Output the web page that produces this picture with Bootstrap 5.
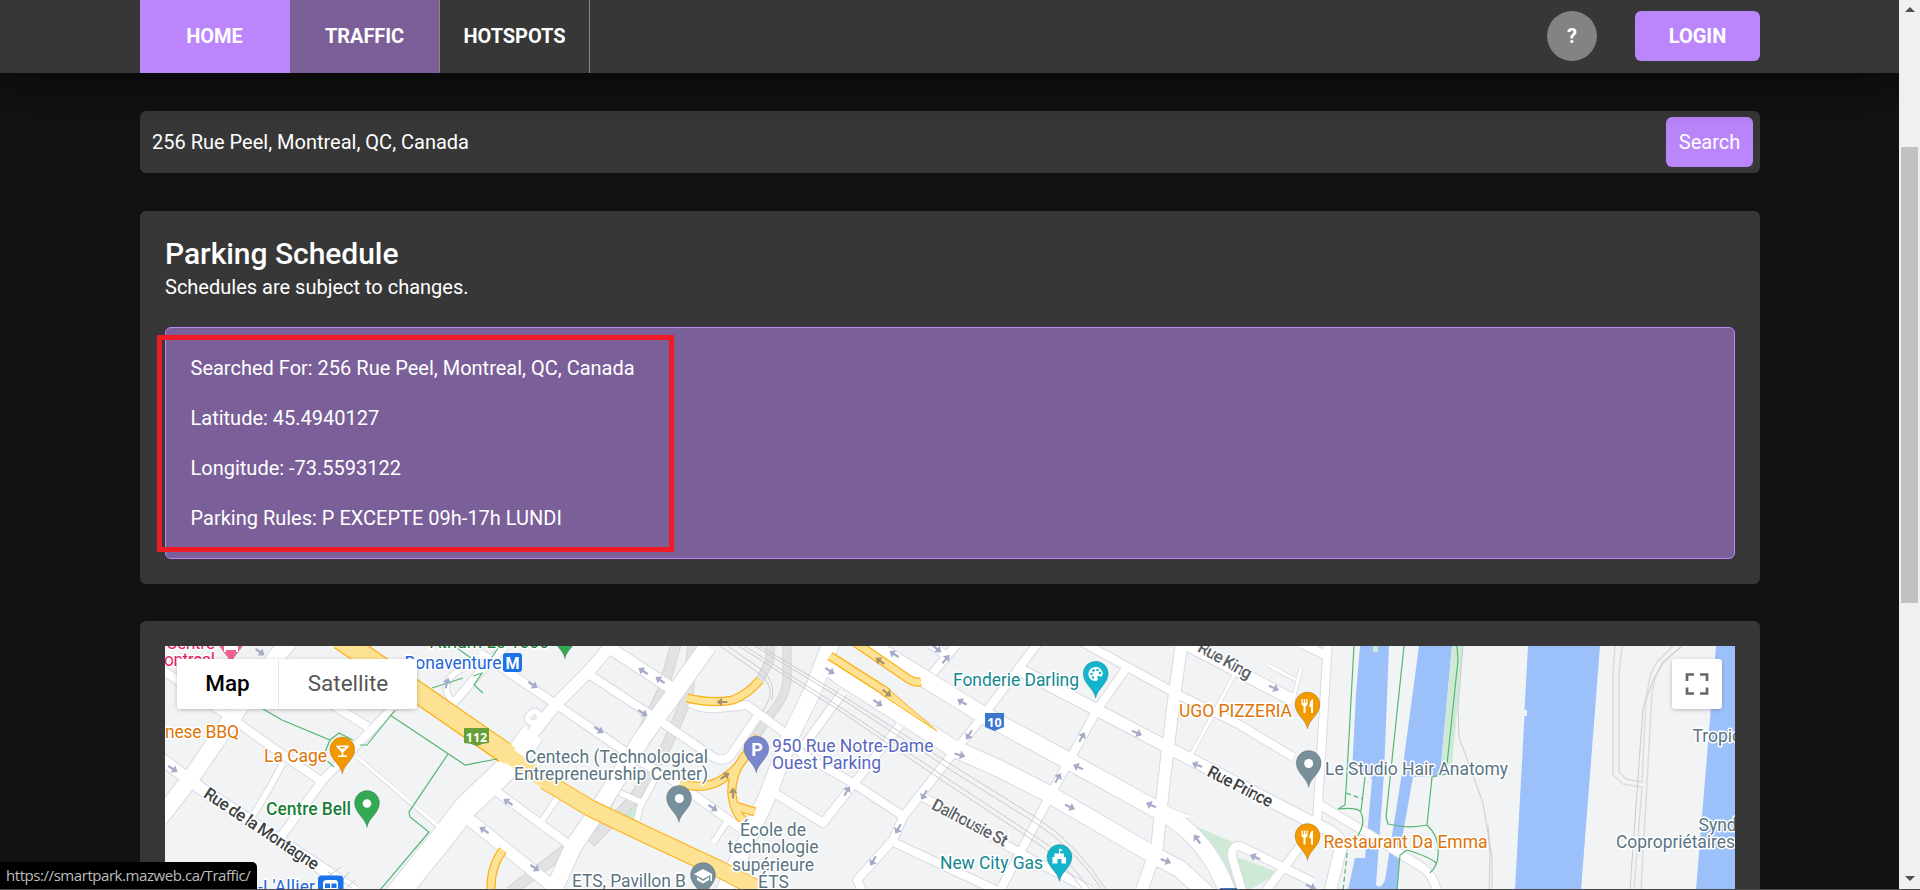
<!DOCTYPE html>
<html lang="en">
<head>
<meta charset="utf-8">
<meta name="viewport" content="width=device-width, initial-scale=1">
<title>SmartPark - Traffic</title>
<link href="https://cdn.jsdelivr.net/npm/bootstrap@5.3.0/dist/css/bootstrap.min.css" rel="stylesheet">
<style>
html{font-size:20px}
body{font-family:Roboto,"Liberation Sans",sans-serif;font-size:20px;line-height:30px;background:#121212;color:#fff;height:890px;overflow:hidden}
.viewport{height:889px;overflow:hidden}
.frame-edge{height:1px;background:#4b494c}
.wrap{width:1620px;margin-left:140px}
.topbar{height:73px;background:#373737;box-shadow:0 10px 50px rgba(0,0,0,.6);z-index:2;padding:0}
.tab{width:150px;height:73px;color:#fff;font-weight:700;border-right:1px solid #878787;text-decoration:none;padding-bottom:2px;letter-spacing:-.05px}
.tab.home{background:#bb86fc;border-color:#bb86fc}
.tab.current{background:#7b5f99}
.actions{padding-bottom:1px}
.help{width:50px;height:50px;background:#838383;font-weight:700}
.btn-violet,.btn-violet:hover{background:#bb86fc;color:#fff;border:0;border-radius:6px;height:50px;padding:0;font-size:20px}
.login{width:125px;margin-left:38px;font-weight:700}
.find{width:87px}
.panel{background:#373737;border-radius:6px}
.searchbar{height:62px;margin-top:38px;padding:0 7px 0 12px}
.schedule{height:373px;margin-top:38px;padding:25px}
.schedule h1{font-size:30px;line-height:36px;font-weight:500;margin:0;letter-spacing:-.04px}
.result{height:232px;background:#7b5f99;border:1px solid #bb86fc;border-radius:6px;margin-top:25px;padding:25px 24.500px}
.result p{margin:0 0 20px}
.marker{left:-9px;top:7px;width:517px;height:217px;border:5px solid #ed1c24}
.mappanel{margin-top:37px;padding:25px 25px 0;height:268px;border-radius:6px 6px 0 0}
.mapbox{height:243px;background:#f1f3f4;overflow:hidden}
.mapbox svg.chart{display:block}
.maptype{left:12px;top:13px;width:240px;height:50px;color:#565656;font-size:22.5px;background:#fff}
.maptype>div{padding-bottom:2px}
.maptype,.fullscreen{background:#fff;border-radius:3px;box-shadow:0 1px 5px -1px rgba(0,0,0,.35)}
.maptype .on{width:102px;color:#000;font-weight:500;border-right:1px solid #e9e9e9}
.fullscreen{right:13px;top:13px;width:50px;height:50px}
.status{left:0;bottom:1px;width:257px;height:27px;background:#000;color:#bdbdbd;border-top-right-radius:5px;font:15px/26px "Open Sans","Noto Sans",sans-serif;letter-spacing:-.44px;padding-left:6px;z-index:5;white-space:nowrap}
.scroller{width:21px;background:#f0f0f0;z-index:3}
.thumb{width:17px;height:456px;background:#c1c1c1;margin-top:129px}
.chart text{font:17.5px Roboto,sans-serif;paint-order:stroke;stroke:#fff;stroke-width:3px;stroke-linejoin:round}
.chart .st{font-weight:500;font-size:17px;fill:#3c4043}
.chart .sh{font:bold 12.5px "Open Sans",sans-serif;fill:#fff;stroke:none}
.slate{fill:#5a7482}.food{fill:#dc7507}.teal{fill:#128891}.indigo{fill:#5866c0}.transit{fill:#2567d8}
.trail{fill:none;stroke:#54b772;stroke-width:1.2}
.rail{fill:none;stroke:#c9cbce;stroke-width:1}
</style>
</head>
<body>
<div class="viewport d-flex">
<div class="flex-grow-1">
<nav class="topbar navbar position-relative">
 <div class="wrap d-flex justify-content-between align-items-center">
  <div class="d-flex">
   <a class="tab home d-flex align-items-center justify-content-center" href="#">HOME</a>
   <a class="tab current d-flex align-items-center justify-content-center" href="#">TRAFFIC</a>
   <a class="tab d-flex align-items-center justify-content-center" href="#">HOTSPOTS</a>
  </div>
  <div class="actions d-flex align-items-center">
   <span class="help rounded-circle d-flex align-items-center justify-content-center">?</span>
   <button class="btn btn-violet login">LOGIN</button>
  </div>
 </div>
</nav>
<main class="wrap">
 <div class="panel searchbar d-flex align-items-center justify-content-between">
  <span>256 Rue Peel, Montreal, QC, Canada</span>
  <button class="btn btn-violet find">Search</button>
 </div>
 <section class="panel schedule">
  <h1>Parking Schedule</h1>
  <div>Schedules are subject to changes.</div>
  <div class="result position-relative">
   <p>Searched For: 256 Rue Peel, Montreal, QC, Canada</p>
   <p>Latitude: 45.4940127</p>
   <p>Longitude: -73.5593122</p>
   <p>Parking Rules: P EXCEPTE 09h-17h LUNDI</p>
   <div class="marker position-absolute"></div>
  </div>
 </section>
 <section class="panel mappanel">
 <div class="mapbox position-relative">
 <svg class="chart" width="1570" height="243" viewBox="165 646 1570 243">
 <defs>
  <g id="big">
   <path d="M160 818L193 775L236 712L262 675L290 640"/>
   <path d="M820 661L840 676L898 713L953 748L1000 769L1047 793L1157 857L1180 869L1207 894"/>
   <path d="M862 640L980 713L1067 760L1163 813Q1210 840 1228 894"/>
   <path d="M708 646L677 690L641 740L600 807L573 847L553 892"/>
   <path d="M832 640L813 690L790 737L767 797L747 840L724 892"/>
  </g>
  <g id="mid">
   <path d="M160 758L203 790L330 874L355 892"/>
   <path d="M610 648L677 692"/>
   <path d="M533 733L557 703L590 670L617 638"/>
   <path d="M470 820L557 890"/>
   <path d="M1020 670L1097 710L1167 747L1240 785L1313 823Q1343 835 1341 847L1330 892"/>
   <path d="M1180 641L1293 700"/>
   <path d="M1182 640L1173 707L1163 790L1157 847L1141 892"/>
  </g>
  <g id="minor">
   <path d="M160 668L245 728L322 782"/><path d="M410 690L323 780L280 838"/>
   <path d="M325 700L368 727"/><path d="M505 646L480 672L452 705"/>
   <path d="M480 653L557 705L633 757L677 783L740 828"/>
   <path d="M690 703Q700 709 718 708L747 705L785 733L803 755L853 783L903 816"/>
   <path d="M590 675L663 723L713 757Q724 763 731 755L757 717"/>
   <path d="M497 792L567 843"/>
   <path d="M843 692L803 747"/><path d="M773 792L823 823L853 785L900 725"/>
   <path d="M1040 640L980 720L953 753L903 817L893 840L857 880L864 894"/>
   <path d="M893 842L1000 892"/>
   <path d="M1075 638L1173 692L1240 725L1293 757"/>
   <path d="M1127 667L1097 710L1053 790L1020 853L998 894"/>
   <path d="M923 797L1020 853L1090 890"/>
   <path d="M1328 640L1320 773L1317 820M1300 643L1328 656"/>
   <path d="M1317 803L1367 833L1423 868Q1434 876 1437 892"/>
   <path d="M1243 894L1232 857Q1231 845 1240 846L1313 882M1305 840L1265 892"/>
   <path d="M957 644L933 673M930 644L947 656"/>
  </g>
  <g id="lane">
   <path d="M283 763L270 787L252 817"/><path d="M558 797L541 822"/><path d="M727 822L713 843"/>
   <path d="M637 820L640 807L660 770M620 793L643 803"/>
   <path d="M541 720C530 726 524 720 530 714S541 714 539 722"/>
   <path d="M453 702C441 690 446 676 462 669"/>
  </g>
  <g id="ramps">
   <path d="M687 698Q712 704 733 700Q748 694 760 680"/>
   <path d="M680 783Q703 791 721 780T747 753L759 737"/>
   <path d="M745 755Q730 777 732 795T745 822M735 806L755 812"/>
   <path d="M830 656L888 693"/><path d="M853 641L907 678Q914 683 921 682"/>
   <path d="M503 850Q490 867 491 892"/>
  </g>
  <path id="arr" d="M-5.500-1.100H0V-4.300L5.500 0L0 4.300V1.100H-5.500Z"/>
  <g id="pin"><path d="M0 24.5C-1.500 15 -12.500 10 -12.500 0A12.500 12.500 0 0 1 12.500 0C12.500 10 1.500 15 0 24.500Z" stroke="#000" stroke-opacity=".15"/></g>
  <path id="fork" fill="#fff" d="M-6-7V-2Q-6 0-4 0V7H-2V0Q0 0 0-2V-7H-1.300V-3H-2.300V-7H-3.700V-3H-4.700V-7ZM5.500-7Q2-6 2 0V1H3.500V7H5.500Z"/>
 </defs>
 <rect x="165" y="646" width="1570" height="243" fill="#f1f3f4"/>
 <!-- water and green space -->
 <g fill="#9cc0f9">
  <path d="M1360 646H1452L1440 776L1413 777L1400 850L1397 890H1348L1355 858H1365L1372 780L1370 773H1352L1356 694Z"/>
  <path d="M1528 646H1600L1581 890H1515L1524.500 716H1527V710H1524.500Z"/><path d="M1716 646H1735V890H1696Z"/>
 </g>
 <path fill="#f1f3f4" d="M1389 646H1419L1402 773L1385 880Q1381 890 1376 885L1384 773Z"/>
 <path fill="#ceead6" d="M1452 646H1463L1452 767L1440 775ZM1197 827L1235 843L1240 890H1228ZM1237 857L1280 873L1245 892ZM640 780H653L637 822H622ZM1373 646H1378V652H1373Z"/>
 <!-- tunnels -->
 <g fill="none" stroke="#d4d4d4" stroke-width="11"><path d="M677 640L663 690L640 737L615 788Q600 825 565 850L510 892M693 640L688 696L667 745L633 800L590 843"/><path stroke-width="9" d="M787 640V680Q786 697 770 715L750 745M770 640V660L760 680"/></g>
 <g fill="none" stroke="#e2e2e2" stroke-width="9"><path d="M677 640L663 690L640 737L615 788Q600 825 565 850L510 892M693 640L688 696L667 745L633 800L590 843"/><path stroke-width="7" d="M787 640V680Q786 697 770 715L750 745M770 640V660L760 680"/></g>
 <path class="rail" d="M720 646L757 672Q772 682 770 697L757 724M728 646L762 670Q776 682 772 700"/>
 <!-- street casings, then surfaces -->
 <g fill="none" stroke="#d9dbe2" stroke-linejoin="round">
  <use href="#big" stroke-width="18.500"/><use href="#mid" stroke-width="13.500"/><use href="#minor" stroke-width="10"/><use href="#lane" stroke-width="7.500"/>
  <path stroke-width="25" d="M395 897L450 828L465 808L510 765L533 733"/>
  <path stroke-width="4.500" d="M357 757L450 837M1237 670L1190 757M1268 665L1296 680M1301 668L1294 696M1163 807L1189 817"/>
 </g>
 <g fill="none" stroke="#fff" stroke-linejoin="round">
  <use href="#big" stroke-width="16.500"/><use href="#mid" stroke-width="11.500"/><use href="#minor" stroke-width="8"/><use href="#lane" stroke-width="5.500"/>
  <path stroke-width="23" d="M395 897L450 828L465 808L510 765L533 733"/>
  <path stroke-width="3" d="M357 757L452 838M1237 670L1190 757M1268 665L1296 680M1301 668L1294 696M1163 807L1189 817"/>
 </g>
 <!-- highways -->
 <g fill="none" stroke="#fbb117" stroke-linejoin="round"><use href="#ramps" stroke-width="9.200"/><path stroke-width="22" d="M340 639L433 703L505 753"/><path stroke-width="17.500" d="M545 781L590 808L640 832L717 868L760 890"/></g>
 <path d="M885 686L937 731L882 695Z" fill="#fde293" stroke="#fbb117"/>
 <g fill="none" stroke="#fde293" stroke-linejoin="round"><use href="#ramps" stroke-width="6.800"/><path stroke-width="19.500" d="M340 639L433 703L510 756"/><path stroke-width="15.500" d="M505 753L545 781L590 808L640 832L717 868L760 890"/></g>
 <!-- railways -->
 <g class="rail">
  <path d="M755 643L840 694L960 770L1037 818Q1075 842 1108 892"/><path d="M750 643L840 698L957 774L1034 822Q1072 845 1104 892"/>
  <path d="M740 643L840 707L945 777L1030 833Q1064 852 1092 892"/><path d="M734 643L840 711L940 779L1028 837Q1058 855 1085 892"/>
  <path d="M1463 646L1458 707L1459 737L1483 803L1492 857V890M1488 825L1490 857L1489 890"/>
  <path stroke="#dadcde" stroke-width="1.500" d="M1615 646L1613 673V775L1623 784L1642 787L1634 890M1622 646L1619 673V772L1626 779L1642 782L1646 697L1651 673L1657 662L1673 646M1682 646L1663 662L1655 677L1652 693L1641 890"/>
  <path d="M1682 646L1663 663L1652 683L1643 708L1630 890M326 878L341 867M335 889L349 872M345 889L355 880M328 872L352 888"/>
 </g>
 <!-- footpaths -->
 <g class="trail">
  <path d="M263 709L282 720L330 740L339 733L353 740M395 710L367 745H360M330 740L323 757L334 767M390 715L465 765L497 759M448 754L409 812L410 817L429 832L380 890M432 688L463 678M473 676L482 673L474 685L483 693M457 648L485 668L498 648"/>
  <path d="M1457 646L1458 660L1446 774L1432 777L1427 825Q1410 829 1388 824L1386 817L1404 646M1354 646L1347 773L1345 805L1338 809Q1355 807 1360 811Q1367 822 1357 837M1365 777L1361 811M1427 825Q1440 837 1438 855Q1438 865 1430 873M1436 863Q1430 857 1407 850L1400 855L1397 890"/>
  <path stroke-dasharray="5 3" d="M1346 793L1363 799M1357 837H1349L1343 890"/>
 </g>
 <g fill="#a6abc9" id="arrows"></g>
 <g fill="#a89468" id="rampArrows"></g>
 <!-- route shields -->
 <path d="M464 728H489V743Q483 743 477 746Q470 743 464 743Z" fill="#689f38"/><text class="sh" x="476.500" y="741.500" text-anchor="middle">112</text>
 <path d="M985 713H1004V727Q999 729 994.500 731Q990 729 985 727Z" fill="#3a77cf"/><text class="sh" x="994.500" y="726.500" text-anchor="middle">10</text>
 <rect x="1220" y="888" width="17" height="2" fill="#3a77cf"/>
 <!-- place labels -->
 <g fill="#e91e63"><text x="166" y="649" textLength="49">Centre</text><text x="164" y="665.500" textLength="51">ontreal</text></g>
 <g class="food"><text x="165" y="738" textLength="74">nese BBQ</text><text x="264" y="762" textLength="63">La Cage</text><text x="1179" y="716.700" textLength="113">UGO PIZZERIA</text><text x="1323.500" y="848.300" textLength="164">Restaurant Da Emma</text></g>
 <g fill="#188038"><text x="266" y="815" textLength="85" style="font-weight:500">Centre Bell</text><text x="430" y="648" textLength="119">Atrium Le 1000</text></g>
 <g class="transit"><text x="404.500" y="668.500" textLength="97">Bonaventure</text><text x="258" y="893" textLength="57">-L'Allier</text></g>
 <g class="slate"><text x="525" y="762.700" textLength="183">Centech (Technological</text><text x="514" y="780" textLength="194">Entrepreneurship Center)</text>
  <text x="740" y="835.500" textLength="66">École de</text><text x="727.500" y="853" textLength="91">technologie</text><text x="732" y="870.700" textLength="82">supérieure</text><text x="758" y="888" textLength="31">ÉTS</text><text x="572" y="886.700" textLength="114">ETS, Pavillon B</text>
  <text x="1325" y="775" textLength="183">Le Studio Hair Anatomy</text><text x="1692.500" y="742">Tropic</text><text x="1698.500" y="831">Synd</text><text x="1616" y="848.300" textLength="119">Copropriétaires</text></g>
 <g class="indigo"><text x="772" y="751.700" textLength="161.500">950 Rue Notre-Dame</text><text x="772" y="769.200" textLength="109">Ouest Parking</text></g>
 <g class="teal"><text x="953" y="685.700" textLength="126">Fonderie Darling</text><text x="940" y="868.700" textLength="103">New City Gas</text></g>
 <text class="st" transform="translate(202.500 796.500)rotate(33.500)" textLength="134">Rue de la Montagne</text>
 <text class="st" style="fill:#5f6368" transform="translate(930.500 808.500)rotate(27.500)" textLength="83">Dalhousie St</text>
 <text class="st" transform="translate(1206 775.500)rotate(27)" textLength="71">Rue Prince</text>
 <text class="st" style="fill:#5f6368" transform="translate(1196.500 651)rotate(29)" textLength="59">Rue King</text>
 <!-- pins -->
 <g fill="#f06292" transform="translate(231 640)"><use href="#pin"/><path fill="#fff" d="M-7 4H7V12H5V10H-5V12H-7Z"/></g>
 <g fill="#34a853"><use href="#pin" x="565" y="634.500"/><use href="#pin" x="367" y="803"/></g><circle cx="367" cy="803.500" r="4.300" fill="#fff"/>
 <g fill="#f29900"><use href="#pin" x="342.300" y="749.500"/><use href="#pin" x="1307.500" y="704.500"/><use href="#pin" x="1307.500" y="836"/></g>
 <path d="M336.500 745.500H348.500V747L343.300 752.500V755.500H347V757H338V755.500H341.700V752.500L336.500 747ZM339.500 747L341 748.600H344L345.500 747Z" fill="#fff" fill-rule="evenodd"/>
 <use href="#fork" x="1307.500" y="706"/><use href="#fork" x="1307.500" y="837.500"/>
 <g fill="#78909c"><use href="#pin" x="679" y="798"/><use href="#pin" x="1308.700" y="763"/><use href="#pin" x="703" y="875"/></g>
 <circle cx="679.300" cy="798.500" r="4.500" fill="#fff"/><circle cx="1308.700" cy="763.500" r="4.500" fill="#fff"/>
 <path fill="#fff" d="M694 874L703 869L712 874V881H710.500V875L703 879ZM697 877L703 881L709 877V880L703 883.500L697 880Z"/>
 <g fill="#7986cb"><use href="#pin" x="756.300" y="748.500"/></g><text x="757" y="755.500" text-anchor="middle" style="font-weight:700;font-size:18px;fill:#fff;stroke:none">P</text>
 <g fill="#12b5cb"><use href="#pin" x="1095.700" y="673.700"/><use href="#pin" x="1059.500" y="857"/></g>
 <path fill="#fff" d="M1096 667C1086 667 1086 681 1096 681Q1099 680 1097 677Q1098 675 1101 677Q1104 674 1102 671Q1100 667 1096 667Z"/>
 <g fill="#12b5cb"><circle cx="1091.500" cy="674" r="1.300"/><circle cx="1093.500" cy="670.500" r="1.300"/><circle cx="1097.500" cy="670" r="1.300"/><circle cx="1100" cy="673" r="1.300"/><circle cx="1093" cy="677.500" r="1.300"/></g>
 <path fill="#fff" d="M1059 848.500L1063 850L1060 851.500V853.500H1064V857H1066V863.500H1061.500V859H1057.500V863.500H1052.500V857H1054.500V853.500H1059Z"/>
 <rect x="503" y="653" width="19" height="19" rx="3" fill="#1a73e8"/><text x="512.500" y="668.500" text-anchor="middle" style="font-weight:700;font-size:16px;fill:#fff;stroke:none">M</text>
 <rect x="318" y="875.500" width="25.500" height="22" rx="4" fill="#1a73e8"/><path d="M323 889V883Q323 880 327 880H335Q338 880 338 883V889Z" fill="#fff"/><path fill="#1a73e8" d="M325 883.500H330V888H325ZM331.500 883.500H336.500V888H331.500Z"/>
 </svg>
 <div class="maptype position-absolute d-flex"><div class="on d-flex align-items-center justify-content-center">Map</div><div class="flex-grow-1 d-flex align-items-center justify-content-center">Satellite</div></div>
 <div class="fullscreen position-absolute d-flex align-items-center justify-content-center"><svg width="24" height="24" fill="none" stroke="#666" stroke-width="2.700"><path d="M2 9V2.500H9M15 2.500H22V9M22 15.500V21.500H15M9 21.500H2V15.500"/></svg></div>
 </div>
 </section>
</main>
</div>
<div class="scroller d-flex flex-column align-items-center position-relative">
 <svg width="10" height="6" style="margin-top:7px;margin-bottom:5px"><path d="M0 5L5 0L10 5Z" fill="#505050"/></svg>
 <div class="thumb"></div>
 <svg class="mt-auto" width="10" height="6" style="margin-bottom:7px"><path d="M0 0H10L5 5Z" fill="#505050"/></svg>
</div>
</div>
<div class="frame-edge"></div>
<div class="status position-absolute">https://smartpark.mazweb.ca/Traffic/</div>
<script src="https://cdn.jsdelivr.net/npm/bootstrap@5.3.0/dist/js/bootstrap.bundle.min.js"></script>
<script>
// One-way street arrows: x, y, heading in degrees
const put=(id,list)=>{document.getElementById(id).innerHTML=list.map(a=>`<use href="#arr" transform="translate(${a[0]} ${a[1]})rotate(${a[2]})"/>`).join('')};
put('arrows',[[260,652,35],[173,769,33],[447,683,-75],[533,685,33],[508,802,-147],[484,830,-147],[535,868,33],[643,671,-147],[660,680,-147],[643,713,33],[599,730,33],[713,808,33],[830,671,33],[878,703,33],[847,791,-60],[873,861,120],[894,654,-147],[937,649,40],[946,659,-50],[962,702,-150],[969,735,120],[960,755,15],[924,795,120],[898,829,120],[1082,737,-60],[1058,778,-60],[1078,767,-155],[1137,733,25],[1070,807,25],[1151,805,-155],[1166,861,20],[1197,839,-125],[1197,765,-160],[1274,688,25],[1255,857,-155],[1311,887,25]]);
put('rampArrows',[[722,702,180],[725,776,-35],[733,793,-90],[880,661,-145],[887,693,38]]);
</script>
</body>
</html>
